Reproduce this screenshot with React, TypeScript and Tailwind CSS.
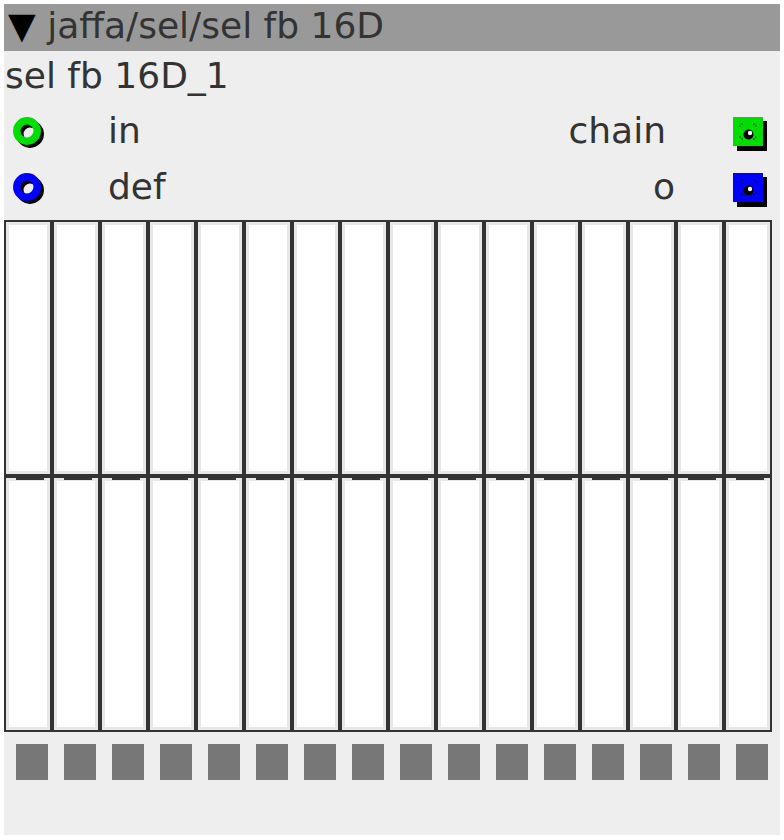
import React from 'react';

const FONT = { fontFamily: '"DejaVu Sans", Verdana, sans-serif' };

// Inlet port: a ring with a dark drop shadow
function RingPort({ color }: { color: string }) {
  return (
    <svg width="36" height="36" viewBox="0 0 36 36">
      <circle cx="17" cy="17" r="10.2" fill="none" stroke="#000" strokeWidth="7.5" />
      <circle cx="14" cy="14" r="10.2" fill="none" stroke={color} strokeWidth="7.5" />
    </svg>
  );
}

// Outlet port: a square with shadow, corner marks and a dot
function SquarePort({ color }: { color: string }) {
  return (
    <svg width="40" height="40" viewBox="0 0 40 40">
      <rect x="4" y="4" width="30" height="30" fill="#000" />
      <rect x="0" y="0" width="30" height="29" fill={color} />
      <g stroke="#000" strokeWidth="1" strokeDasharray="2 2" fill="none" opacity="0.7">
        <path d="M7 10 V7 H10" />
        <path d="M20 7 H23 V10" />
        <path d="M23 19 V22 H20" />
        <path d="M10 22 H7 V19" />
      </g>
      <circle cx="15.5" cy="17.5" r="5" fill="#000" />
      <circle cx="17" cy="16" r="2.2" fill="#fff" />
    </svg>
  );
}

function Slider() {
  return (
    <div className="relative w-[48px] h-full flex flex-col border-2 border-[#333]">
      <div className="flex-1 bg-white shadow-[inset_0_0_0_3px_#e8e8e8]" />
      <div className="h-[4px] bg-[#333] -mx-[2px]" />
      <div className="flex-1 bg-white shadow-[inset_0_0_0_3px_#e8e8e8]" />
      <div className="absolute left-[10px] top-[254px] w-[28px] h-[4px] bg-[#333]" />
    </div>
  );
}

function PortRow({ label, out, color, gap }: { label: string; out: string; color: string; gap: number }) {
  return (
    <div className="h-[56px] flex items-start">
      <div className="w-[104px] pl-[9px] pt-[16px]"><RingPort color={color} /></div>
      <span className="mt-[12px]">{label}</span>
      <div className="flex-1" />
      <span className="mt-[12px]" style={{ marginRight: gap }}>{out}</span>
      <div className="w-[40px] mt-[16px] mr-[7px]"><SquarePort color={color} /></div>
    </div>
  );
}

export default function App() {
  const sliders = Array.from({ length: 16 }, (_, i: number) => i);

  return (
    <div className="w-[784px] h-[840px] bg-white p-[4px]" style={FONT}>
      <div className="w-[776px] h-[831px] bg-[#eeeeee] text-[#333] text-[36px] leading-[36px]">
        <div className="h-[47px] bg-[#999999] px-[4px] pt-[4px]">
          <span className="text-black">▼</span> jaffa/sel/sel fb 16D
        </div>

        <div className="h-[50px] pt-[7px] px-[1px]">sel fb 16D_1</div>

        <PortRow label="in" out="chain" color="#00dd00" gap={67} />
        <PortRow label="def" out="o" color="#0000ff" gap={58} />

        <div className="flex h-[512px] mt-[7px]">
          {sliders.map((i: number) => (
            <Slider key={i} />
          ))}
        </div>

        <div className="flex gap-[16px] pl-[12px] mt-[12px]">
          {sliders.map((i: number) => (
            <div key={i} className="w-[32px] h-[36px] bg-[#777777]" />
          ))}
        </div>
      </div>
    </div>
  );
}
